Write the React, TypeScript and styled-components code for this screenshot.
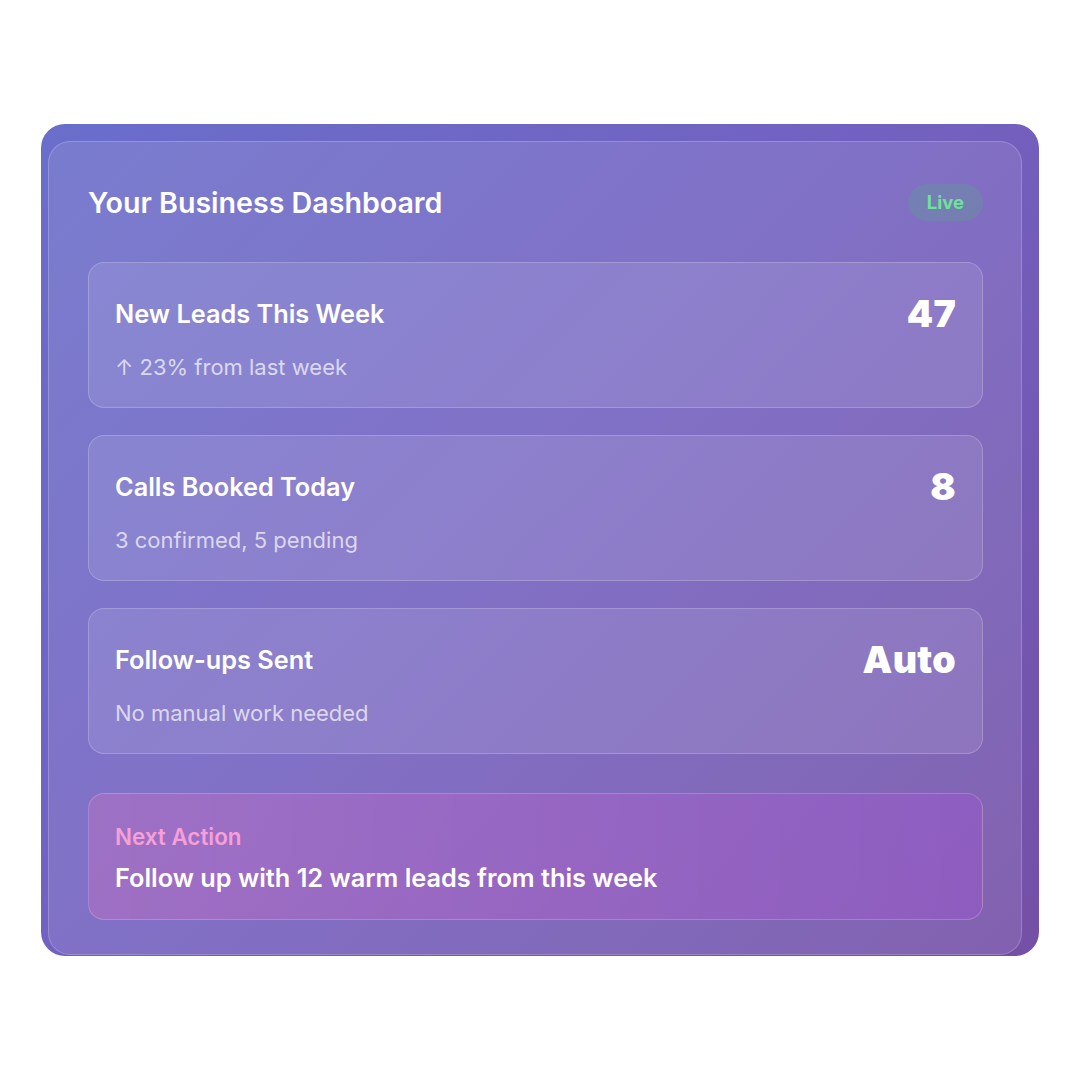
import React from 'react';
import styled, { createGlobalStyle } from 'styled-components';

const GlobalStyle = createGlobalStyle`
  html, body {
    margin: 0;
    padding: 0;
    background: #ffffff;
  }
  body {
    font-family: Inter, "Noto Sans", sans-serif;
  }
`;

const Page = styled.div`
  width: 1080px;
  height: 1080px;
  display: flex;
  align-items: center;
  justify-content: center;
`;

// outer gradient frame, the glass panel sits a bit off-centre inside it
const Frame = styled.div`
  width: 998px;
  height: 832px;
  box-sizing: border-box;
  padding: 17px 17px 0 7px;
  border-radius: 24px;
  overflow: hidden;
  background: linear-gradient(135deg, #6a6ecb 0%, #7360bf 50%, #7450a6 100%);
  display: flex;
`;

const Panel = styled.div`
  flex: 1;
  box-sizing: border-box;
  height: 814px;
  padding: 39px 38px 0 39px;
  border-radius: 22px;
  background: rgba(255, 255, 255, 0.1);
  border: 1px solid rgba(255, 255, 255, 0.2);
  display: flex;
  flex-direction: column;
`;

const Header = styled.div`
  display: flex;
  align-items: center;
  justify-content: space-between;
  height: 42px;
  margin-bottom: 39px;
`;

const Title = styled.h2`
  margin: 0;
  font-size: 28.6px;
  font-weight: 600;
  color: #ffffff;
`;

const Badge = styled.span`
  display: inline-flex;
  align-items: center;
  height: 37px;
  padding: 0 19px;
  border-radius: 999px;
  background: rgba(72, 187, 120, 0.22);
  color: #6fe39a;
  font-size: 18.5px;
  font-weight: 700;
`;

const Stats = styled.div`
  display: flex;
  flex-direction: column;
  gap: 27px;
`;

const StatCard = styled.div`
  box-sizing: border-box;
  height: 146px;
  padding: 27px 26px 0 26px;
  border-radius: 16px;
  background: rgba(255, 255, 255, 0.1);
  border: 1px solid rgba(255, 255, 255, 0.2);
`;

const StatRow = styled.div`
  display: flex;
  align-items: center;
  justify-content: space-between;
  height: 46px;
  margin-bottom: 16px;
`;

const StatLabel = styled.span`
  font-size: 25.3px;
  font-weight: 600;
  color: #ffffff;
`;

const StatValue = styled.span`
  font-size: 37.5px;
  font-weight: 900;
  color: #ffffff;
  letter-spacing: 0.3px;
`;

const StatNote = styled.div`
  font-size: 22px;
  line-height: 31px;
  color: rgba(255, 255, 255, 0.7);
`;

const ActionCard = styled.div`
  box-sizing: border-box;
  margin-top: 39px;
  height: 127px;
  padding: 27px 26px 0 26px;
  border-radius: 16px;
  background: linear-gradient(90deg, rgba(236, 110, 190, 0.28), rgba(168, 80, 220, 0.32));
  border: 1px solid rgba(255, 255, 255, 0.2);
`;

const ActionLabel = styled.div`
  font-size: 22.4px;
  line-height: 31px;
  font-weight: 600;
  color: #f6a0d8;
  margin-bottom: 10px;
`;

const ActionText = styled.div`
  font-size: 25.3px;
  line-height: 31px;
  font-weight: 600;
  color: #ffffff;
`;

const stats = [
  { label: 'New Leads This Week', value: '47', note: '↑ 23% from last week' },
  { label: 'Calls Booked Today', value: '8', note: '3 confirmed, 5 pending' },
  { label: 'Follow-ups Sent', value: 'Auto', note: 'No manual work needed' },
];

export default function App() {
  return (
    <>
      <GlobalStyle />
      <Page>
        <Frame>
          <Panel>
            <Header>
              <Title>Your Business Dashboard</Title>
              <Badge>Live</Badge>
            </Header>
            <Stats>
              {stats.map((s) => (
                <StatCard key={s.label}>
                  <StatRow>
                    <StatLabel>{s.label}</StatLabel>
                    <StatValue>{s.value}</StatValue>
                  </StatRow>
                  <StatNote>{s.note}</StatNote>
                </StatCard>
              ))}
            </Stats>
            <ActionCard>
              <ActionLabel>Next Action</ActionLabel>
              <ActionText>Follow up with 12 warm leads from this week</ActionText>
            </ActionCard>
          </Panel>
        </Frame>
      </Page>
    </>
  );
}
